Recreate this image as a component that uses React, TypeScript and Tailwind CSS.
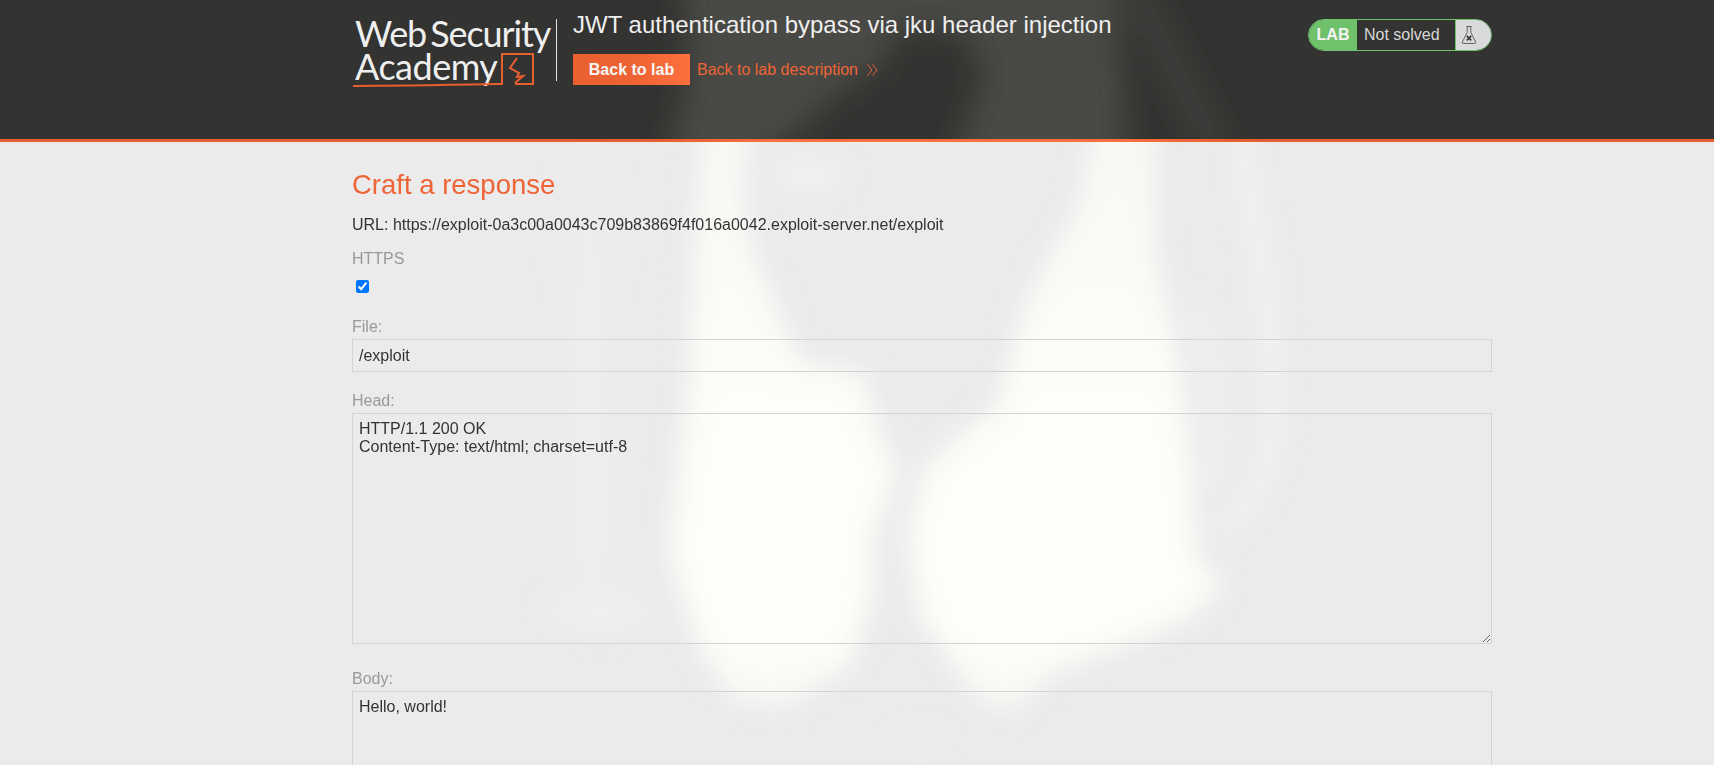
const Backdrop = () => (
  <svg className="absolute inset-0 h-full w-full" viewBox="0 0 1714 765" aria-hidden="true">
    <defs>
      <filter id="soft" x="-20%" y="-20%" width="140%" height="140%">
        <feGaussianBlur stdDeviation="13" />
      </filter>
      <linearGradient id="fade" gradientUnits="userSpaceOnUse" x1="0" y1="130" x2="0" y2="720">
        <stop offset="0" stopColor="#fdfdf9" stopOpacity="0.7" />
        <stop offset="0.4" stopColor="#fdfdf9" stopOpacity="0.95" />
        <stop offset="0.85" stopColor="#fdfdf9" stopOpacity="1" />
        <stop offset="1" stopColor="#fdfdf9" stopOpacity="0.7" />
      </linearGradient>
    </defs>
    <g filter="url(#soft)" fill="url(#fade)">
      <path d="M702 120 L752 120 L742 190 L752 251 L786 332 L802 365 L862 372 L880 438 L898 474 L872 535 L872 596 L850 665 L787 705 L735 700 L700 648 L670 555 L680 454 L690 380 L692 300 Z" />
      <path d="M926 465 L998 405 L1027 300 L1080 203 L1094 120 L1155 120 L1155 251 L1180 373 L1190 454 L1196 560 L1225 583 L1185 620 L1045 677 L1017 710 L980 700 L920 616 L908 535 Z" />
      <path d="M775 158 L845 165 L835 188 L785 188 Z" opacity="0.5" />
      <ellipse cx="919" cy="742" rx="22" ry="20" opacity="0.18" />
      <ellipse cx="600" cy="610" rx="55" ry="22" opacity="0.22" />
      <rect x="560" y="140" width="60" height="440" opacity="0.12" />
      <path d="M1240 135 C1260 250 1282 380 1268 460 C1260 500 1235 520 1220 530" fill="none" stroke="#fdfdf9" strokeWidth="14" opacity="0.5" />
      <path d="M1195 300 C1215 350 1228 420 1215 490" fill="none" stroke="#fdfdf9" strokeWidth="10" opacity="0.45" />
    </g>
  </svg>
);

const HeaderBackdrop = () => (
  <svg className="absolute inset-0 h-full w-full" viewBox="0 0 1714 139" aria-hidden="true">
    <defs>
      <filter id="softDark" x="-20%" y="-20%" width="140%" height="140%">
        <feGaussianBlur stdDeviation="14" />
      </filter>
    </defs>
    <g filter="url(#softDark)" fill="#4a4944">
      <path d="M683 -30 L1117 -30 L1126 170 L951 170 L985 70 L960 30 L895 30 L885 60 L830 100 L750 170 L667 170 L690 70 Z" />
      <path d="M1120 -10 L1150 -10 L1230 150 L1200 150 Z" opacity="0.45" />
    </g>
  </svg>
);

const Logo = () => (
  <div className="relative h-[62px] w-[205px] shrink-0 border-r border-[#e4e4e4] font-['Lato',sans-serif] font-normal text-[#efefef]">
    <div className="ml-[3px] mt-[-1px] whitespace-nowrap text-[36px] leading-[31px] tracking-[-1.1px] [word-spacing:-4px]">Web Security</div>
    <div className="ml-[3px] mt-[2px] whitespace-nowrap text-[36px] leading-[31px] tracking-[-0.5px]">Academy</div>
    <svg className="absolute left-0 top-0" width="190" height="70" viewBox="352 19 190 70" fill="none" stroke="#e8602f" strokeWidth="2">
      <path d="M353 86 C400 86 450 85 502 84 L502 54 L533 54 L533 84 L515 84" />
      <path d="M517 58 L510 68 L519 73 L517 77 L523 76 L515 83" />
    </svg>
  </div>
);

const Flask = () => (
  <svg width="16" height="20" viewBox="0 0 18 22" fill="none" stroke="#555" strokeWidth="1">
    <path d="M6 1.5 H12 M7 1.5 V8 L1.5 19 Q1 20.5 2.5 20.5 H15.5 Q17 20.5 16.5 19 L11 8 V1.5" />
    <path d="M6.5 12 L11.5 17 M11.5 12 L6.5 17" strokeWidth="1.8" stroke="#333" />
  </svg>
);

const Field = ({ label, className, children }: { label: string; className: string; children: React.ReactNode }) => (
  <div className={className}>
    <label className="block leading-[18px] text-[#999]">{label}</label>
    {children}
  </div>
);

export default function App() {
  return (
    <div className="relative h-[765px] overflow-hidden bg-[#ebebeb] font-['Liberation_Sans',sans-serif] text-[16px] text-[#333]">
      <Backdrop />

      <header className="relative h-[142px]">
        <div className="relative h-[139px] overflow-hidden bg-[#333332]">
          <HeaderBackdrop />
          <div className="relative ml-[352px] flex w-[1140px] items-start pt-[19px]">
            <Logo />
            <div className="ml-[16px] mt-[-11px] flex-1">
              <h2 className="text-[24px] leading-[34px] text-[#efefef]">JWT authentication bypass via jku header injection</h2>
              <div className="mt-[12px] flex items-center">
                <a className="flex h-[31px] w-[117px] items-center justify-center bg-gradient-to-r from-[#ea6030] via-[#ee6333] to-[#fe6f3e] font-bold text-[#f6f6f6]">Back to lab</a>
                <a className="ml-[7px] flex items-center text-[#ee6436]">
                  Back to lab description
                  <svg className="ml-[9px]" width="11" height="12" viewBox="0 0 11 12" fill="none" stroke="#ee6436" strokeWidth="1">
                    <path d="M0.5 0.5 L5 6 L0.5 11.5 M5.5 0.5 L10 6 L5.5 11.5" />
                  </svg>
                </a>
              </div>
            </div>
            <div className="flex h-[32px] w-[184px] overflow-hidden rounded-full border border-[#70c16c]">
              <div className="flex w-[48px] items-center justify-center bg-[#70c16c] font-bold text-[#f4f4f4]">LAB</div>
              <div className="flex flex-1 items-center bg-[#333332] pl-[7px] text-[#d8d8d8]">Not solved</div>
              <div className="flex w-[36px] items-center justify-center border-l border-[#70c16c] bg-[#d8dadc] pr-[10px]">
                <Flask />
              </div>
            </div>
          </div>
        </div>
        <div className="h-[3px] bg-[linear-gradient(90deg,#e85f2f_38%,#fb6e3e_45%,#fb6e3e_66%,#e85f2f_72%)]" />
      </header>

      <main className="relative ml-[352px] w-[1140px]">
        <h1 className="mt-[27px] text-[27.5px] leading-[32px] text-[#ee6436]">Craft a response</h1>
        <p className="mt-[15px] leading-[18px]">URL: https://exploit-0a3c00a0043c709b83869f4f016a0042.exploit-server.net/exploit</p>
        <div className="mt-[16px] leading-[18px] text-[#999]">HTTPS</div>
        <input type="checkbox" defaultChecked className="ml-[4px] mt-[12px] block h-[13px] w-[13px]" />
        <Field label="File:" className="mt-[25px]">
          <input
            defaultValue="/exploit"
            className="mt-[3px] block h-[33px] w-full border border-[#d3d3d3] bg-transparent px-[6px] outline-none"
          />
        </Field>
        <Field label="Head:" className="mt-[20px]">
          <textarea
            defaultValue={"HTTP/1.1 200 OK\nContent-Type: text/html; charset=utf-8"}
            className="mt-[3px] block h-[231px] w-full border border-[#d3d3d3] bg-transparent px-[6px] pb-[5px] pt-[6px] leading-[18px] outline-none"
          />
        </Field>
        <Field label="Body:" className="mt-[26px]">
          <textarea
            defaultValue="Hello, world!"
            className="mt-[3px] block h-[231px] w-full border border-[#d3d3d3] bg-transparent px-[6px] pb-[5px] pt-[6px] leading-[18px] outline-none"
          />
        </Field>
      </main>
    </div>
  );
}
